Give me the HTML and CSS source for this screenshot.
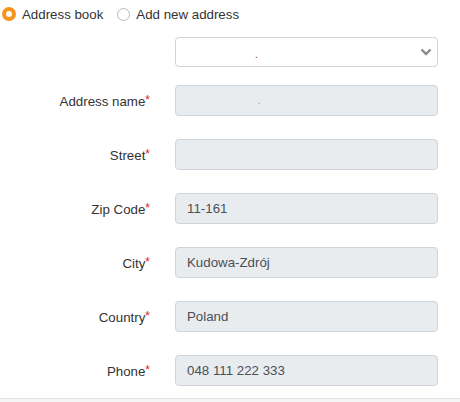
FILE: index.html
```html
<!DOCTYPE html>
<html>
<head>
<meta charset="utf-8">
<link rel="stylesheet" href="styles.css">
</head>
<body>
<div class="page">
  <div class="radios">
    <label class="radio"><span class="dot-radio checked"></span><span>Address book</span></label>
    <label class="radio"><span class="dot-radio"></span><span>Add new address</span></label>
  </div>
  <div class="form">
    <div class="row row-select">
      <div class="label"></div>
      <div class="select"><span class="sel-text">.</span>
        <svg class="chev" width="12" height="8" viewBox="0 0 12 8"><path d="M1.5 1.5 L6 6 L10.5 1.5" fill="none" stroke="#8a8a8a" stroke-width="2.4"/></svg>
      </div>
    </div>
    <div class="row">
      <div class="label">Address name<span class="req">*</span></div>
      <div class="input"><span class="ghost-dot">.</span></div>
    </div>
    <div class="row">
      <div class="label">Street<span class="req">*</span></div>
      <div class="input"></div>
    </div>
    <div class="row">
      <div class="label">Zip Code<span class="req">*</span></div>
      <div class="input">11-161</div>
    </div>
    <div class="row">
      <div class="label">City<span class="req">*</span></div>
      <div class="input">Kudowa-Zdrój</div>
    </div>
    <div class="row">
      <div class="label">Country<span class="req">*</span></div>
      <div class="input">Poland</div>
    </div>
    <div class="row">
      <div class="label">Phone<span class="req">*</span></div>
      <div class="input">048 111 222 333</div>
    </div>
  </div>
  <div class="footer"></div>
</div>
</body>
</html>
```
FILE: styles.css
```css
html, body {
  margin: 0;
  padding: 0;
  background: #fff;
}
body {
  font-family: "Liberation Sans", Arial, sans-serif;
  font-size: 13.3px;
  color: #333;
  width: 460px;
  height: 402px;
  overflow: hidden;
}
.page {
  display: flex;
  flex-direction: column;
}
.radios {
  display: flex;
  align-items: center;
  height: 28px;
  padding-left: 2px;
  gap: 14px;
}
.radio {
  display: flex;
  align-items: center;
  gap: 6px;
  color: #333;
}
.dot-radio {
  width: 13px;
  height: 13px;
  border-radius: 50%;
  border: 1px solid #b5b9bd;
  box-sizing: border-box;
  background: #fff;
}
.dot-radio.checked {
  width: 14px;
  height: 14px;
  border: 4px solid #f7941d;
  background: #fff;
}
.form {
  display: flex;
  flex-direction: column;
  gap: 23px;
  margin-top: 9px;
}
.row {
  display: flex;
  align-items: center;
  height: 31px;
}
.row-select {
  height: 30px;
  margin-bottom: -5px;
}
.label {
  width: 150px;
  text-align: right;
  padding-right: 25px;
  color: #333;
}
.req {
  color: #e0212b;
  font-size: 12px;
  vertical-align: 2px;
}
.select {
  position: relative;
  width: 263px;
  height: 30px;
  box-sizing: border-box;
  border: 1px solid #cfd3d7;
  border-radius: 4px;
  background: #fff;
}
.sel-text {
  position: absolute;
  left: 79px;
  top: 11px;
  font-size: 10px;
  color: #7a1a1a;
}
.chev {
  position: absolute;
  right: 5px;
  top: 10px;
}
.input {
  width: 263px;
  height: 31px;
  box-sizing: border-box;
  border: 1px solid #ced4da;
  border-radius: 4px;
  background: #e9ecef;
  color: #495057;
  padding-left: 11px;
  display: flex;
  align-items: center;
  position: relative;
}
.ghost-dot {
  position: absolute;
  left: 82px;
  top: 10px;
  font-size: 9px;
  color: #8a8f94;
}
.footer {
  margin-top: 12px;
  height: 10px;
  border-top: 1px solid #e3e3e3;
  background: #f5f5f5;
}
```
